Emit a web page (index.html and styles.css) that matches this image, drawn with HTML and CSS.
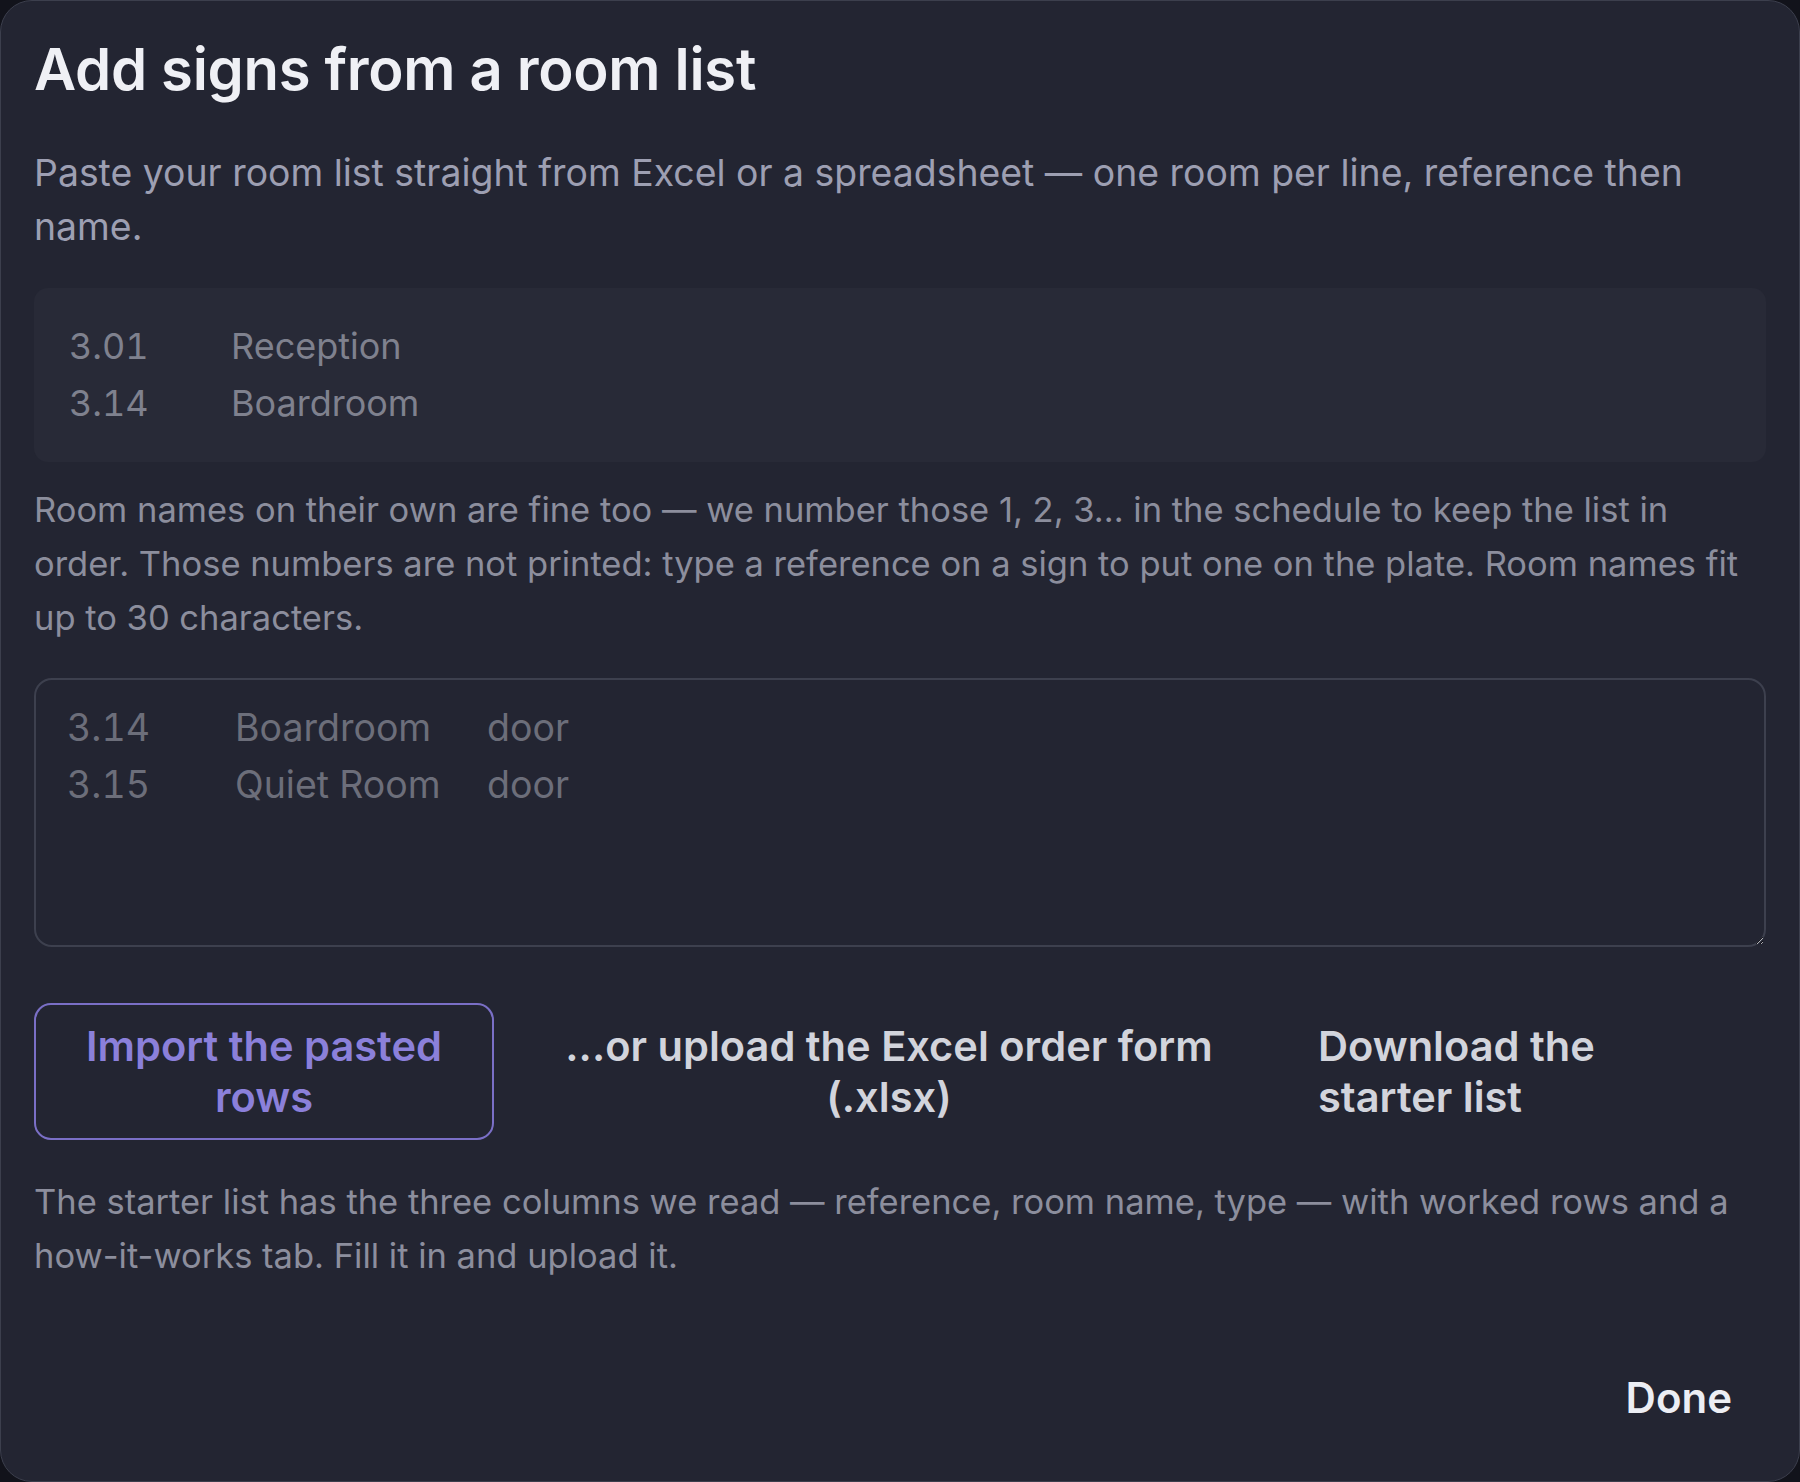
FILE: index.html
```html
<!DOCTYPE html>
<html lang="en">
<head>
<meta charset="utf-8">
<title>Add signs from a room list</title>
<link rel="stylesheet" href="styles.css">
</head>
<body>
<div class="dialog" role="dialog" aria-labelledby="dlg-title">
  <h1 class="title" id="dlg-title">Add signs from a room list</h1>
  <p class="lead">Paste your room list straight from Excel or a spreadsheet — one room per line, reference then name.</p>
  <pre class="example">3.01	Reception
3.14	Boardroom</pre>
  <p class="hint">Room names on their own are fine too — we number those 1, 2, 3... in the schedule to keep the list in order. Those numbers are not printed: type a reference on a sign to put one on the plate. Room names fit up to 30 characters.</p>
  <textarea class="paste" placeholder="3.14&#9;Boardroom&#9;door&#10;3.15&#9;Quiet Room&#9;door"></textarea>
  <div class="actions">
    <button class="btn btn-import" type="button">Import the pasted rows</button>
    <button class="btn btn-upload" type="button">...or upload the Excel order form (.xlsx)</button>
    <button class="btn btn-download" type="button">Download the starter list</button>
  </div>
  <p class="hint note">The starter list has the three columns we read — reference, room name, type — with worked rows and a how-it-works tab. Fill it in and upload it.</p>
  <div class="footer">
    <button class="btn btn-done" type="button">Done</button>
  </div>
</div>
</body>
</html>
```
FILE: styles.css
```css
* { box-sizing: border-box; }
html, body { margin: 0; padding: 0; }
body {
  background: #12131b;
  font-family: Inter, "Noto Sans", sans-serif;
  width: 1800px;
  height: 1482px;
  overflow: hidden;
}
.dialog {
  width: 1800px;
  height: 1482px;
  background: #232532;
  border: 1px solid #3c3f4d;
  border-radius: 32px;
  padding: 33px 33px 20px;
  display: flex;
  flex-direction: column;
}
.title {
  margin: 0;
  font-size: 58px;
  line-height: 70px;
  font-weight: 600;
  color: #eff0f5;
  letter-spacing: -0.3px;
}
.lead {
  margin: 42px 0 0;
  font-size: 37.4px;
  line-height: 54px;
  color: #9d9fb2;
}
.example {
  margin: 34px 0 0;
  height: 174px;
  padding: 30px 35px;
  background: #282a37;
  border-radius: 14px;
  font-family: Inter, "Noto Sans", sans-serif;
  font-size: 36px;
  line-height: 57px;
  color: #7f818e;
  font-variant-numeric: tabular-nums;
  tab-size: 81px;
  white-space: pre;
}
.hint {
  margin: 21px 0 0;
  max-width: 1712px;
  font-size: 34.5px;
  line-height: 54px;
  color: #8c8e9d;
}
.paste {
  display: block;
  margin: 33px 0 0;
  width: 100%;
  height: 269px;
  padding: 19px 31px;
  background: #232532;
  border: 2px solid #3d404e;
  border-radius: 18px;
  font-family: Inter, "Noto Sans", sans-serif;
  font-size: 37.5px;
  line-height: 57px;
  color: #c9cbd6;
  font-variant-numeric: tabular-nums;
  tab-size: 84px;
  outline: none;
  resize: vertical;
  color-scheme: dark;
}
.paste::placeholder { color: #6c6e7a; opacity: 1; }
.actions {
  margin-top: 56px;
  display: flex;
  align-items: center;
}
.btn {
  font-family: Inter, "Noto Sans", sans-serif;
  font-size: 41.6px;
  line-height: 50.5px;
  font-weight: 600;
  background: transparent;
  border: 0;
  color: #d2d4dc;
  cursor: pointer;
  padding: 0;
}
.btn-import {
  width: 460px;
  padding: 16px 36px;
  border: 2.5px solid #7a6fc6;
  border-radius: 17px;
  color: #8b80da;
  text-align: center;
}
.btn-upload {
  width: 790px;
  padding: 0 36px;
  text-align: center;
}
.btn-download {
  width: 370px;
  padding: 0 34px;
  text-align: left;
}
.note { margin-top: 35px; }
.footer {
  margin-top: auto;
  display: flex;
  justify-content: flex-end;
}
.btn-done {
  font-size: 42px;
  line-height: 52px;
  padding: 14px 34px;
  color: #eceef4;
  margin-bottom: 23px;
}
```
